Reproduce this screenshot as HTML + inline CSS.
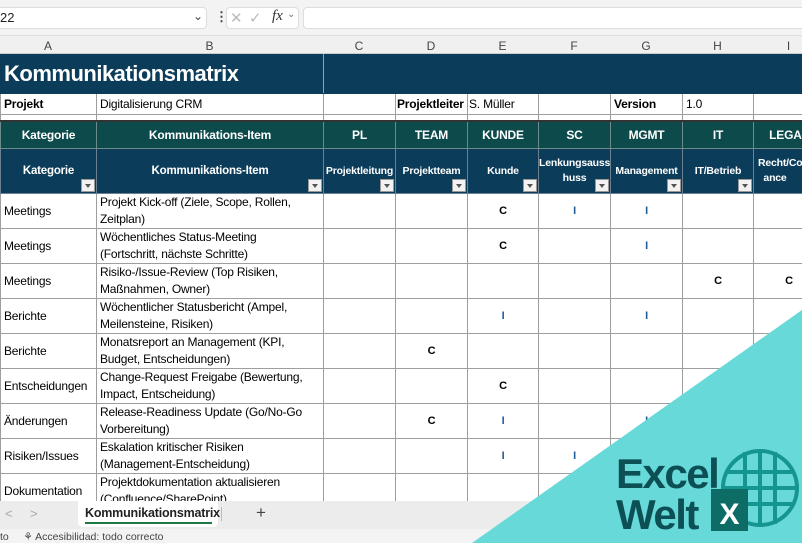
<!DOCTYPE html>
<html><head><meta charset="utf-8"><style>
*{margin:0;padding:0;box-sizing:border-box}
body{width:802px;height:543px;overflow:hidden;background:#fff;font-family:"Liberation Sans",Arial,sans-serif;position:relative;font-size:12px;color:#000}
.a{position:absolute}
table{position:absolute;left:0;top:0;border-collapse:collapse;table-layout:fixed}
td{border:1px solid #9e9e9e;overflow:hidden;white-space:nowrap;padding:0 3px;font-size:12px;letter-spacing:-0.2px}
.h1 td{background:#0c4a4b;color:#fff;font-weight:bold;text-align:center;border-color:#6d8a8c}
.h2 td{background:#0b3d5b;color:#fff;font-weight:bold;text-align:center;border-color:#6b8090;position:relative;font-size:10.5px;line-height:15px}
.dd{position:absolute;right:1px;bottom:1px;width:14px;height:13px;background:#f2f2f2;border:1px solid #999}
.dd:after{content:"";position:absolute;left:3px;top:4px;border-left:3.5px solid transparent;border-right:3.5px solid transparent;border-top:4px solid #555}
.d td{height:34.6px;vertical-align:middle}
.d td.w{line-height:17px}
.c{text-align:center;font-weight:bold;font-size:11px}
.i{color:#1f5c9a}
</style></head><body>
<div class="a" style="left:0;top:0;width:802px;height:36px;background:#f3f3f3;border-bottom:1px solid #ddd"></div>
<div class="a" style="left:-4px;top:7px;width:211px;height:22px;background:#fff;border:1px solid #ddd;border-radius:4px"></div>
<div class="a" style="left:0;top:10px;font-size:13px;color:#222">22</div>
<div class="a" style="left:193px;top:9px;font-size:12px;color:#444">&#8964;</div>
<div class="a" style="left:215px;top:9px;font-size:13px;color:#444;font-weight:bold">&#8942;</div>
<div class="a" style="left:226px;top:7px;width:73px;height:22px;background:#fff;border:1px solid #ddd;border-radius:4px"></div>
<div class="a" style="left:230px;top:9px;font-size:15px;color:#bbb">&#10005;</div>
<div class="a" style="left:249px;top:9px;font-size:15px;color:#bbb">&#10003;</div>
<div class="a" style="left:272px;top:8px;font-size:15px;color:#333;font-style:italic;font-family:'Liberation Serif',serif">fx</div>
<div class="a" style="left:287px;top:9px;font-size:10px;color:#777">&#8964;</div>
<div class="a" style="left:303px;top:7px;width:510px;height:22px;background:#fff;border:1px solid #ddd;border-radius:4px"></div>
<div class="a" style="left:0;top:36px;width:802px;height:18px;background:#f0f0f0;border-bottom:1px solid #ccc"></div>
<div class="a" style="left:0;top:39px;width:96px;text-align:center;color:#444">A</div>
<div class="a" style="left:96px;top:39px;width:227px;text-align:center;color:#444">B</div>
<div class="a" style="left:323px;top:39px;width:72px;text-align:center;color:#444">C</div>
<div class="a" style="left:395px;top:39px;width:72px;text-align:center;color:#444">D</div>
<div class="a" style="left:467px;top:39px;width:71px;text-align:center;color:#444">E</div>
<div class="a" style="left:538px;top:39px;width:72px;text-align:center;color:#444">F</div>
<div class="a" style="left:610px;top:39px;width:72px;text-align:center;color:#444">G</div>
<div class="a" style="left:682px;top:39px;width:71px;text-align:center;color:#444">H</div>
<div class="a" style="left:753px;top:39px;width:71px;text-align:center;color:#444">I</div>
<div style="position:absolute;left:0;top:54px">
<table style="width:824px">
<colgroup><col style="width:96px"><col style="width:227px"><col style="width:72px"><col style="width:72px"><col style="width:71px"><col style="width:72px"><col style="width:72px"><col style="width:71px"><col style="width:71px"></colgroup>
<tr style="height:39px"><td colspan="2" style="background:#0b3d5b;color:#fff;font-weight:bold;font-size:22px;letter-spacing:-0.5px;border-color:#0b3d5b #9e9e9e #0b3d5b #0b3d5b">Kommunikationsmatrix</td><td colspan="7" style="background:#0b3d5b;border-color:#0b3d5b"></td></tr>
<tr style="height:21px"><td style="font-weight:bold">Projekt</td><td>Digitalisierung CRM</td><td></td><td style="font-weight:bold;padding:0 1px">Projektleiter</td><td style="padding:0 1px">S. Müller</td><td></td><td style="font-weight:bold">Version</td><td>1.0</td><td></td></tr>
<tr style="height:6px"><td style="padding:0;border-bottom:2px solid #333"></td><td style="padding:0;border-bottom:2px solid #333"></td><td style="padding:0;border-bottom:2px solid #333"></td><td style="padding:0;border-bottom:2px solid #333"></td><td style="padding:0;border-bottom:2px solid #333"></td><td style="padding:0;border-bottom:2px solid #333"></td><td style="padding:0;border-bottom:2px solid #333"></td><td style="padding:0;border-bottom:2px solid #333"></td><td style="padding:0;border-bottom:2px solid #333"></td></tr>
<tr class="h1" style="height:28px"><td>Kategorie</td><td>Kommunikations-Item</td><td>PL</td><td>TEAM</td><td>KUNDE</td><td>SC</td><td>MGMT</td><td>IT</td><td>LEGAL</td></tr>
<tr class="h2" style="height:45px"><td style="font-size:11.5px">Kategorie<span class="dd"></span></td><td style="font-size:11.5px">Kommunikations-Item<span class="dd"></span></td><td style="padding:0">Projektleitung<span class="dd"></span></td><td>Projektteam<span class="dd"></span></td><td>Kunde<span class="dd"></span></td><td style="padding:0">Lenkungsaussc<br>huss<span class="dd"></span></td><td style="padding:0">Management<span class="dd"></span></td><td>IT/Betrieb<span class="dd"></span></td><td style="padding:0 0 0 4px;text-align:left">Recht/Compli<br>&nbsp;&nbsp;ance<span class="dd"></span></td></tr>
<tr class="d"><td>Meetings</td><td class="w">Projekt Kick-off (Ziele, Scope, Rollen,<br>Zeitplan)</td><td></td><td></td><td class="c">C</td><td class="c i">I</td><td class="c i">I</td><td></td><td></td></tr>
<tr class="d"><td>Meetings</td><td class="w">Wöchentliches Status-Meeting<br>(Fortschritt, nächste Schritte)</td><td></td><td></td><td class="c">C</td><td></td><td class="c i">I</td><td></td><td></td></tr>
<tr class="d"><td>Meetings</td><td class="w">Risiko-/Issue-Review (Top Risiken,<br>Maßnahmen, Owner)</td><td></td><td></td><td></td><td></td><td></td><td class="c">C</td><td class="c">C</td></tr>
<tr class="d"><td>Berichte</td><td class="w">Wöchentlicher Statusbericht (Ampel,<br>Meilensteine, Risiken)</td><td></td><td></td><td class="c i">I</td><td></td><td class="c i">I</td><td></td><td></td></tr>
<tr class="d"><td>Berichte</td><td class="w">Monatsreport an Management (KPI,<br>Budget, Entscheidungen)</td><td></td><td class="c">C</td><td></td><td></td><td></td><td></td><td></td></tr>
<tr class="d"><td>Entscheidungen</td><td class="w">Change-Request Freigabe (Bewertung,<br>Impact, Entscheidung)</td><td></td><td></td><td class="c">C</td><td></td><td></td><td></td><td></td></tr>
<tr class="d"><td>Änderungen</td><td class="w">Release-Readiness Update (Go/No-Go<br>Vorbereitung)</td><td></td><td class="c">C</td><td class="c i">I</td><td></td><td class="c i">I</td><td></td><td></td></tr>
<tr class="d"><td>Risiken/Issues</td><td class="w">Eskalation kritischer Risiken<br>(Management-Entscheidung)</td><td></td><td></td><td class="c i">I</td><td class="c i">I</td><td></td><td></td><td></td></tr>
<tr class="d"><td>Dokumentation</td><td class="w">Projektdokumentation aktualisieren<br>(Confluence/SharePoint)</td><td></td><td></td><td></td><td></td><td></td><td></td><td></td></tr>
</table></div>
<div class="a" style="left:0;top:501px;width:802px;height:28px;background:#ececec"></div>
<div class="a" style="left:5px;top:506px;color:#aaa;font-size:13px">&lt;</div>
<div class="a" style="left:30px;top:506px;color:#aaa;font-size:13px">&gt;</div>
<div class="a" style="left:78px;top:501px;width:140px;height:26px;background:#fff;border-radius:0 0 5px 5px"></div>
<div class="a" style="left:85px;top:506px;font-size:12.5px;font-weight:bold;color:#222;letter-spacing:-0.2px">Kommunikationsmatrix</div>
<div class="a" style="left:85px;top:522px;width:127px;height:2px;background:#1e7a45"></div>
<div class="a" style="left:221px;top:507px;width:1px;height:14px;background:#bbb"></div>
<div class="a" style="left:256px;top:503px;font-size:17px;color:#444">+</div>
<div class="a" style="left:0;top:529px;width:802px;height:14px;background:#f3f3f3"></div>
<div class="a" style="left:0;top:531px;font-size:10.5px;color:#444">to &nbsp;&nbsp;&nbsp;&nbsp;&#9880; Accesibilidad: todo correcto</div>
<svg class="a" style="left:0;top:0" width="802" height="543" viewBox="0 0 802 543">
<polygon points="472,543 802,310 802,543" fill="#66d9d8"/>
<g fill="none" stroke="#15958f" stroke-width="4">
<circle cx="760" cy="488" r="37"/>
<line x1="745" y1="452" x2="745" y2="524"/><line x1="760" y1="451" x2="760" y2="525"/><line x1="775" y1="452" x2="775" y2="524"/>
<line x1="726" y1="472" x2="794" y2="472"/><line x1="723" y1="488" x2="797" y2="488"/><line x1="726" y1="504" x2="794" y2="504"/>
</g>
<rect x="711" y="489" width="37" height="42" fill="#0d6c66"/>
<text x="729.5" y="524" text-anchor="middle" font-family="Liberation Sans" font-weight="bold" font-size="30" fill="#fff">X</text>
<text x="616" y="488" font-family="Liberation Sans" font-weight="bold" font-size="42" fill="#0c4f55" letter-spacing="-1.5">Excel</text>
<text x="616" y="529" font-family="Liberation Sans" font-weight="bold" font-size="42" fill="#0c4f55" letter-spacing="-1.5">Welt</text>
</svg>
</body></html>
